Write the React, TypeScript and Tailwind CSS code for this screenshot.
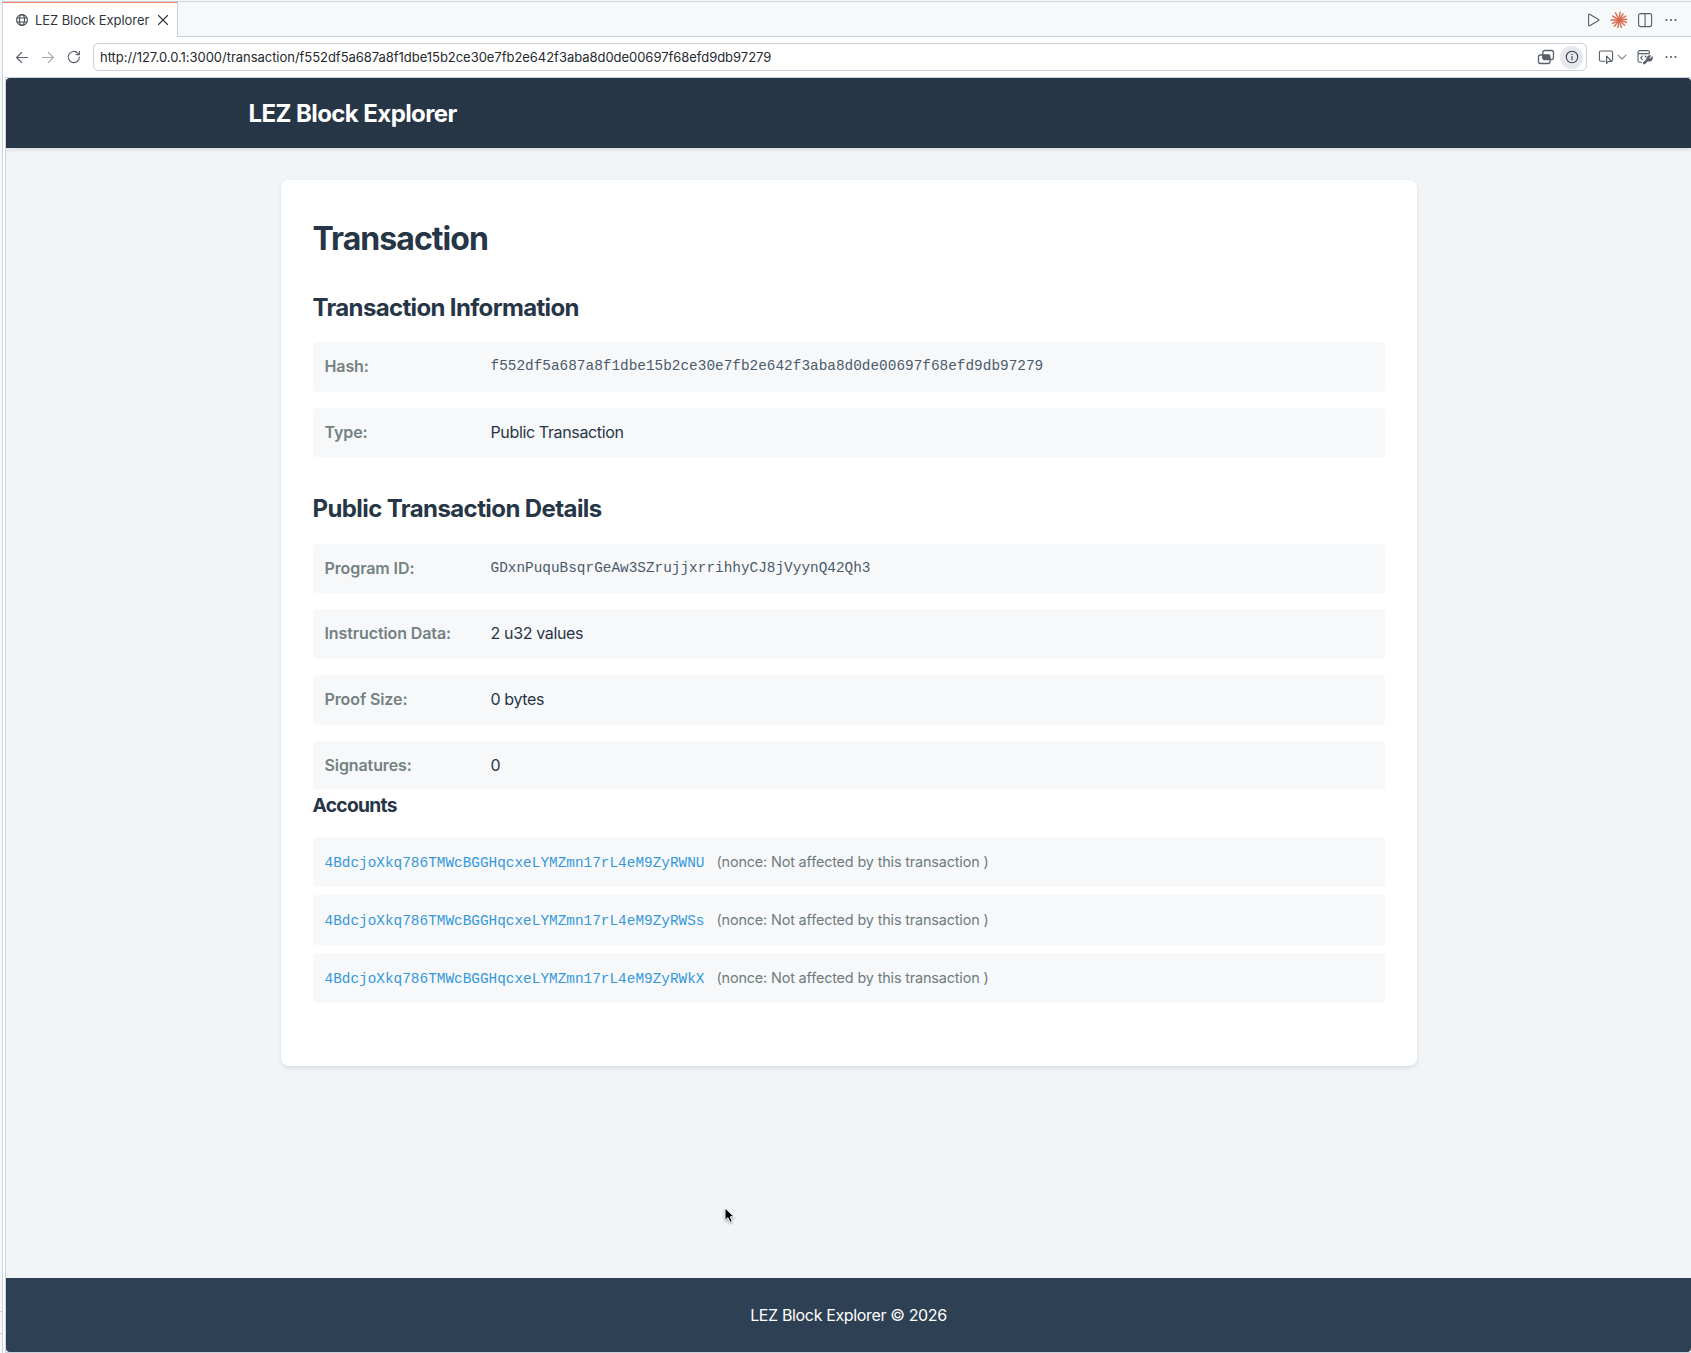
import React from "react";

const SANS = "font-['Inter',sans-serif]";
const MONO = "font-['Liberation_Mono',monospace]";

function Ico({ w = 16, h = 16, className = "", children }: { w?: number; h?: number; className?: string; children: React.ReactNode }) {
  return (
    <svg width={w} height={h} viewBox={`0 0 ${w} ${h}`} fill="none" stroke="currentColor" strokeWidth="1.1" strokeLinecap="round" strokeLinejoin="round" className={`shrink-0 ${className}`}>
      {children}
    </svg>
  );
}

const Dots = ({ className = "" }: { className?: string }) => (
  <Ico className={className}>
    <g fill="currentColor" stroke="none">
      <circle cx="3.5" cy="8" r="1.1" />
      <circle cx="8" cy="8" r="1.1" />
      <circle cx="12.5" cy="8" r="1.1" />
    </g>
  </Ico>
);

const RAYS: [number, number][] = [
  [-82, 7.8], [-56, 7.4], [-30, 7.8], [-6, 7.6], [18, 7.8], [44, 7.6], [72, 7.8],
  [98, 7.6], [126, 7.8], [152, 7.4], [180, 8], [212, 7.4], [244, 8],
];

function Row({ label, value, mono }: { label: string; value: string; mono?: boolean }) {
  return (
    <div className="flex gap-4 rounded-[4px] bg-[#f7f8fa] p-3 text-[16px] leading-[25.6px]">
      <span className="w-[150px] shrink-0 whitespace-nowrap font-semibold tracking-[-0.1px] text-[#748182]">{label}</span>
      {mono ? (
        <span className={`${MONO} text-[14.4px] leading-[24.6px] text-[#4b5b6b]`}>{value}</span>
      ) : (
        <span className="tracking-[-0.36px] text-[#273646]">{value}</span>
      )}
    </div>
  );
}

const ACCOUNTS = [
  "4BdcjoXkq786TMWcBGGHqcxeLYMZmn17rL4eM9ZyRWNU",
  "4BdcjoXkq786TMWcBGGHqcxeLYMZmn17rL4eM9ZyRWSs",
  "4BdcjoXkq786TMWcBGGHqcxeLYMZmn17rL4eM9ZyRWkX",
];

function TabBar() {
  return (
    <div className="flex h-[35px] shrink-0">
      <div className="flex h-[35px] w-[175px] shrink-0 items-center border-r border-t border-r-[#c5d0dc] border-t-[#f9826c] bg-white pl-[12px]">
        <Ico w={14} h={14} className="text-[#444d56]">
          <circle cx="7" cy="7" r="5.4" />
          <ellipse cx="7" cy="7" rx="2.5" ry="5.4" />
          <path d="M2.1 5h9.8M2.1 9h9.8" />
        </Ico>
        <span className="ml-[6px] w-[114px] whitespace-nowrap text-[13px] leading-[20px] tracking-[-0.08px] text-[#2f363d]">LEZ Block Explorer</span>
        <Ico w={14} h={14} className="ml-[7px] text-[#2f363d]">
          <path d="M2.5 2.5l9 9M11.5 2.5l-9 9" />
        </Ico>
      </div>
      <div className="flex h-[35px] flex-1 items-center justify-end border-b border-[#c5d0dc] bg-[#f6f8fa] pr-[12px] pt-px text-[#586069]">
        <Ico><path d="M3.600 2.900v10.200a.7.7 0 0 0 1 .6l9-5.100a.7.7 0 0 0 0-1.200l-9-5.100a.7.7 0 0 0-1 .6Z" /></Ico>
        <Ico w={18} h={18} className="ml-[9px] text-[#d9694b]">
          {RAYS.map(([a, r]) => (
            <line key={a} x1="9" y1="9" x2={9 + r * Math.cos((a * Math.PI) / 180)} y2={9 + r * Math.sin((a * Math.PI) / 180)} strokeWidth="1.400" />
          ))}
        </Ico>
        <Ico className="ml-[9px]">
          <rect x="1.600" y="1.600" width="13" height="13" rx="2" />
          <path d="M8.100 1.600v13" />
        </Ico>
        <Dots className="ml-[10px]" />
      </div>
    </div>
  );
}

function AddressBar() {
  return (
    <div className="flex h-[40px] shrink-0 items-center bg-white pl-[11px] pr-[12px] text-[#586069]">
      <Ico><path d="M13.600 8.500H2.600M7.600 3.500L2.600 8.500l5 5" /></Ico>
      <Ico className="ml-[10px] text-[#a5abb1]"><path d="M2.400 8.500h11M8.400 3.500l5 5-5 5" /></Ico>
      <Ico className="ml-[10px]"><path d="M13.400 8A5.600 5.600 0 1 1 11.900 4.200L13.400 5.600M13.400 2.400v3.200h-3.200" /></Ico>
      <div className="ml-[11px] flex h-[28px] flex-1 items-center rounded-[5px] border border-[#c9d3dd] pl-[6px] pr-[3px]">
        <span className="whitespace-nowrap text-[13px] leading-[20px] tracking-[-0.035px] text-[#24292e]">
          http://127.0.0.1:3000/transaction/f552df5a687a8f1dbe15b2ce30e7fb2e642f3aba8d0de00697f68efd9db97279
        </span>
        <div className="flex-1" />
        <Ico w={18}>
          <path d="M6 6H3.400A1.900 1.900 0 0 0 1.500 7.900v4.700A1.900 1.900 0 0 0 3.400 14.500h7.700A1.900 1.900 0 0 0 13 12.600V10.500" strokeWidth="1.300" />
          <rect x="5.800" y="1.500" width="10.700" height="9" rx="1.900" strokeWidth="1.300" />
          <path d="M6 5.800h5.500a1.500 1.500 0 0 1 1.500 1.500v3H7.500A1.500 1.500 0 0 1 6 8.800Z" fill="currentColor" />
        </Ico>
        <div className="ml-[5px] flex size-[23px] items-center justify-center rounded-full bg-[#e6e8ee]">
          <Ico className="text-[#3a4149]">
            <circle cx="8" cy="8" r="5.700" />
            <path d="M8 7.500v3.200" />
            <circle cx="8" cy="5.400" r=".7" fill="currentColor" stroke="none" />
          </Ico>
        </div>
      </div>
      <Ico className="ml-[11px]">
        <path d="M7 12.300H3A1.600 1.600 0 0 1 1.400 10.700V3.600A1.600 1.600 0 0 1 3 2h10A1.600 1.600 0 0 1 14.600 3.600v6.600a1.600 1.600 0 0 1-.8 1.600" />
        <path d="M8.600 7.200v7.200l2.100-2.100h3Z" strokeWidth="1.200" />
      </Ico>
      <Ico w={12} className="ml-[2px] text-[#7d858d]"><path d="M2 6.200L6 10l4-3.800" /></Ico>
      <Ico w={18} className="ml-[8px]">
        <path d="M5.500 13.200H3.800A1.800 1.800 0 0 1 2 11.400V3.400A1.800 1.800 0 0 1 3.800 1.600h7.800A1.800 1.800 0 0 1 13.400 3.400v1.400M2 4.600h11.400M6.400 7L4.700 8.800l1.700 1.800M9 7l1 1" />
        <path d="M8.200 14.200l4-4" strokeWidth="2.600" />
        <path d="M16.200 8l-1.900 1.800-1.200-1.200 1.700-1.800a3 3 0 0 0-3.800 3.900l1.600 1.400a3 3 0 0 0 3.600-4.100Z" fill="currentColor" strokeWidth=".8" />
      </Ico>
      <Dots className="ml-[9px]" />
    </div>
  );
}

export default function App() {
  return (
    <div className={`${SANS} relative flex h-[1353px] w-[1691px] overflow-hidden bg-[#f6f8fa]`}>
      <div className="flex w-[3px] shrink-0 flex-col border-r border-[#c9d3dd] pt-[1311px]">
        <div className="h-[23px] border-y border-[#c9d3dd]" />
      </div>
      <div className="mt-px flex min-w-0 flex-1 flex-col border-t border-[#c9d3dd] bg-white">
        <TabBar />
        <AddressBar />
        <div className="ml-[2px] flex flex-1 flex-col border-l border-t border-[#c9d3dd]">
          <div className="flex h-[1274px] shrink-0 flex-col overflow-hidden rounded-[4px] bg-[#f1f5f8]">
            <header className="h-[70.4px] shrink-0 bg-[#273646] shadow-[0_2px_4px_rgba(0,0,0,0.1)]">
              <div className="mx-auto flex h-full w-[1200px] items-center pt-[2px] text-[24px] font-bold tracking-[-0.58px] text-white">LEZ Block Explorer</div>
            </header>
            <main className="mx-auto w-[1200px] flex-1 px-8 pt-8 text-[#273646]">
              <section className="h-[885.6px] rounded-[8px] bg-white p-8 shadow-[0_2px_4px_rgba(0,0,0,0.1)]">
                <h1 className="pt-px text-[32px] font-bold leading-[51.2px] tracking-[-0.95px]">Transaction</h1>
                <h2 className="mb-[14.5px] mt-[24.5px] text-[24px] font-bold leading-[38.4px] tracking-[-0.65px]">Transaction Information</h2>
                <div className="grid gap-4">
                  <Row label="Hash:" value="f552df5a687a8f1dbe15b2ce30e7fb2e642f3aba8d0de00697f68efd9db97279" mono />
                  <Row label="Type:" value="Public Transaction" />
                </div>
                <h2 className="mb-[15px] mt-[33.2px] text-[24px] font-bold leading-[38.4px] tracking-[-0.59px]">Public Transaction Details</h2>
                <div className="grid gap-4">
                  <Row label="Program ID:" value="GDxnPuquBsqrGeAw3SZrujjxrrihhyCJ8jVyynQ42Qh3" mono />
                  <Row label="Instruction Data:" value="2 u32 values" />
                  <Row label="Proof Size:" value="0 bytes" />
                  <Row label="Signatures:" value="0" />
                </div>
                <h3 className="mb-4 text-[19.2px] font-bold leading-[30.7px] tracking-[-0.68px]">Accounts</h3>
                <div className="grid gap-2">
                  {ACCOUNTS.map((id) => (
                    <div key={id} className="flex h-[50px] items-baseline rounded-[4px] bg-[#f7f8fa] p-3 text-[14.4px] leading-[25.6px]">
                      <a className={`${MONO} text-[#3498db]`}>{id}</a>
                      <span className="ml-3 whitespace-nowrap tracking-[-0.15px] text-[#6e7c7d]">(nonce: Not affected by this transaction )</span>
                    </div>
                  ))}
                </div>
              </section>
            </main>
            <footer className="flex h-[74px] shrink-0 items-center justify-center bg-[#2e4053] text-[16px] tracking-[-0.35px] text-white">LEZ Block Explorer © 2026</footer>
          </div>
          <div className="border-t border-[#c9d3dd]" />
        </div>
      </div>
      <svg width="16" height="20" viewBox="0 0 16 20" className="absolute left-[723px] top-[1206px] drop-shadow-[0_1px_1px_rgba(0,0,0,0.35)]">
        <path d="M2 2v12.400l2.900-2.700 2.100 4.700 2.300-1-2-4.600h3.900Z" fill="#000" stroke="#fff" strokeWidth="1" />
      </svg>
    </div>
  );
}
